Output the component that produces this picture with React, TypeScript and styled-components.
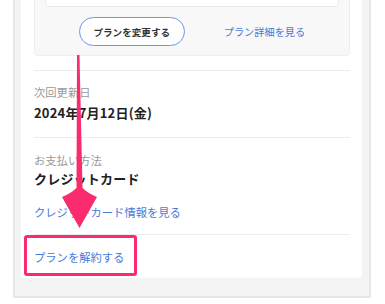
import styled, { createGlobalStyle } from "styled-components";

const GlobalStyle = createGlobalStyle`
	html, body {
		margin: 0;
		padding: 0;
		background: #ffffff;
	}
	body {
		font-family: "Noto Sans CJK JP", "Noto Sans", sans-serif;
	}
`;

const Page = styled.div`
	position: relative;
	width: 385px;
	height: 304px;
	overflow: hidden;
`;

const Frame = styled.div`
	margin: -60px 0 0 13px;
	width: 341px;
	padding: 0 7px 18px 6px;
	background: #f3f3f3;
	border: 2px solid #e6e6e6;
`;

const Card = styled.div`
	background: #ffffff;
	border-radius: 4px;
	padding: 12px 12px 0 13px;
`;

const PlanBox = styled.div`
	background: #f8f8f8;
	border: 1px solid #eeeeee;
	border-radius: 4px;
	padding: 10px 10px 9px;
`;

const PlanInner = styled.div`
	height: 40px;
	background: #ffffff;
	border: 1px solid #e8e8e8;
	border-radius: 4px;
`;

const ButtonRow = styled.div`
	display: flex;
	justify-content: center;
	align-items: center;
	gap: 39px;
	margin-top: 10px;
`;

const PillButton = styled.button`
	width: 106px;
	height: 29px;
	border: 1.5px solid #6d94ef;
	border-radius: 15px;
	background: #ffffff;
	color: #333333;
	font-family: inherit;
	font-size: 9.6px;
	font-weight: 700;
	padding: 0;
`;

const TextLink = styled.a<{ $size?: number; $gap?: number }>`
	display: block;
	margin-top: ${(p) => p.$gap ?? 0}px;
	color: #4a78da;
	font-size: ${(p) => p.$size ?? 11.3}px;
	line-height: 16px;
	text-decoration: none;
`;

const Section = styled.div<{ $top: number; $bottom: number; $line?: boolean }>`
	position: relative;
	padding: ${(p) => p.$top}px 0 ${(p) => p.$bottom}px;
	border-top: ${(p) => (p.$line ? "1px solid #ececec" : "none")};
`;

const Label = styled.div`
	color: #9a9a9a;
	font-size: 11.3px;
	line-height: 16px;
`;

const Value = styled.div<{ $gap: number }>`
	margin-top: ${(p) => p.$gap}px;
	color: #222222;
	font-size: 13px;
	font-weight: 700;
	line-height: 18px;
	letter-spacing: 0.2px;
`;

const Highlight = styled.div`
	position: absolute;
	left: -10px;
	top: 0;
	width: 113px;
	height: 41px;
	box-sizing: border-box;
	border: 3px solid #fb2c6d;
	border-radius: 3px;
`;

const Arrow = styled.svg`
	position: absolute;
	left: 0;
	top: 0;
	pointer-events: none;
`;

export default function App() {
	return (
		<Page>
			<GlobalStyle />
			<Frame>
				<Card>
					<PlanBox>
						<PlanInner />
						<ButtonRow>
							<PillButton>プランを変更する</PillButton>
							<TextLink $size={10.2}>プラン詳細を見る</TextLink>
						</ButtonRow>
					</PlanBox>
					<Section $top={14} $bottom={0} />
					<Section $top={13} $bottom={15} $line>
						<Label>次回更新日</Label>
						<Value $gap={4}>2024年7月12日(金)</Value>
					</Section>
					<Section $top={14} $bottom={14} $line>
						<Label>お支払い方法</Label>
						<Value $gap={2}>クレジットカード</Value>
						<TextLink $gap={16}>クレジットカード情報を見る</TextLink>
					</Section>
					<Section $top={14} $bottom={13} $line>
						<TextLink>プランを解約する</TextLink>
						<Highlight />
					</Section>
				</Card>
			</Frame>
			<Arrow width="385" height="304" viewBox="0 0 385 304">
				<path
					d="M77 55 L79.5 55 L82.5 188 Q89 194 97 197 L79.5 228 L62 197 Q70 194 76.5 188 Z"
					fill="#fb2c6d"
				/>
			</Arrow>
		</Page>
	);
}
